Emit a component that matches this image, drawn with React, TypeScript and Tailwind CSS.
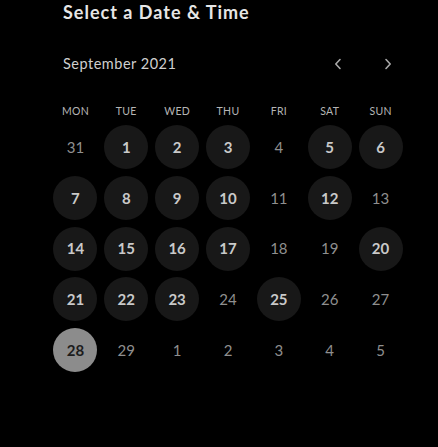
import React from 'react';

type Day = { n: number; state: 'off' | 'on' | 'sel' };

const avail = new Set([1, 2, 3, 5, 6, 7, 8, 9, 10, 12, 14, 15, 16, 17, 20, 21, 22, 23, 25]);

const days: Day[] = [
  { n: 31, state: 'off' },
  ...Array.from({ length: 29 }, (_, i) => {
    const n = i + 1;
    return { n, state: n === 28 ? 'sel' : avail.has(n) ? 'on' : 'off' } as Day;
  }),
  ...[1, 2, 3, 4, 5].map(n => ({ n, state: 'off' } as Day)),
];

const weekdays = ['MON', 'TUE', 'WED', 'THU', 'FRI', 'SAT', 'SUN'];

const Chevron = ({ dir }: { dir: 'l' | 'r' }) => (
  <svg width="8" height="12" viewBox="0 0 8 12" fill="none" stroke="#a8a8a8" strokeWidth="1.6" strokeLinecap="round" strokeLinejoin="round">
    {dir === 'l' ? <path d="M6 1.5 1.8 6 6 10.5" /> : <path d="M2 1.5 6.2 6 2 10.5" />}
  </svg>
);

export default function App() {
  return (
    <div className="w-full h-[447px] bg-black overflow-hidden" style={{ fontFamily: 'Lato, "Open Sans", sans-serif' }}>
      <h1 className="ml-[63px] text-[18px] leading-[24px] font-bold tracking-[1px] text-[#e6e6e6]">Select a Date &amp; Time</h1>

      <div className="flex items-center h-[24px] mt-[28px]">
        <span className="ml-[63px] text-[14.5px] tracking-[0.5px] text-[#cfcfcf]">September 2021</span>
        <div className="ml-auto mr-[46px] flex items-center gap-[42px]">
          <Chevron dir="l" />
          <Chevron dir="r" />
        </div>
      </div>

      <div className="ml-[50px] w-[356px] grid grid-cols-7 mt-[28px]">
        {weekdays.map(w => (
          <div key={w} className="h-[16px] flex items-center justify-center text-[10.5px] tracking-[0.3px] text-[#b5b5b5]">{w}</div>
        ))}
      </div>

      <div className="ml-[50px] w-[356px] grid grid-cols-7 gap-y-[6.75px] mt-[5px]">
        {days.map((d, i) => (
          <div key={i} className="flex items-center justify-center">
            <div
              className={
                'w-[44px] h-[44px] rounded-full flex items-center justify-center text-[15px] ' +
                (d.state === 'sel'
                  ? 'bg-[#8c8c8c] text-[#1c1c1c] font-bold'
                  : d.state === 'on'
                  ? 'bg-[#181818] text-[#c9c9c9] font-bold'
                  : 'text-[#8f8f8f]')
              }
            >
              {d.n}
            </div>
          </div>
        ))}
      </div>
    </div>
  );
}
